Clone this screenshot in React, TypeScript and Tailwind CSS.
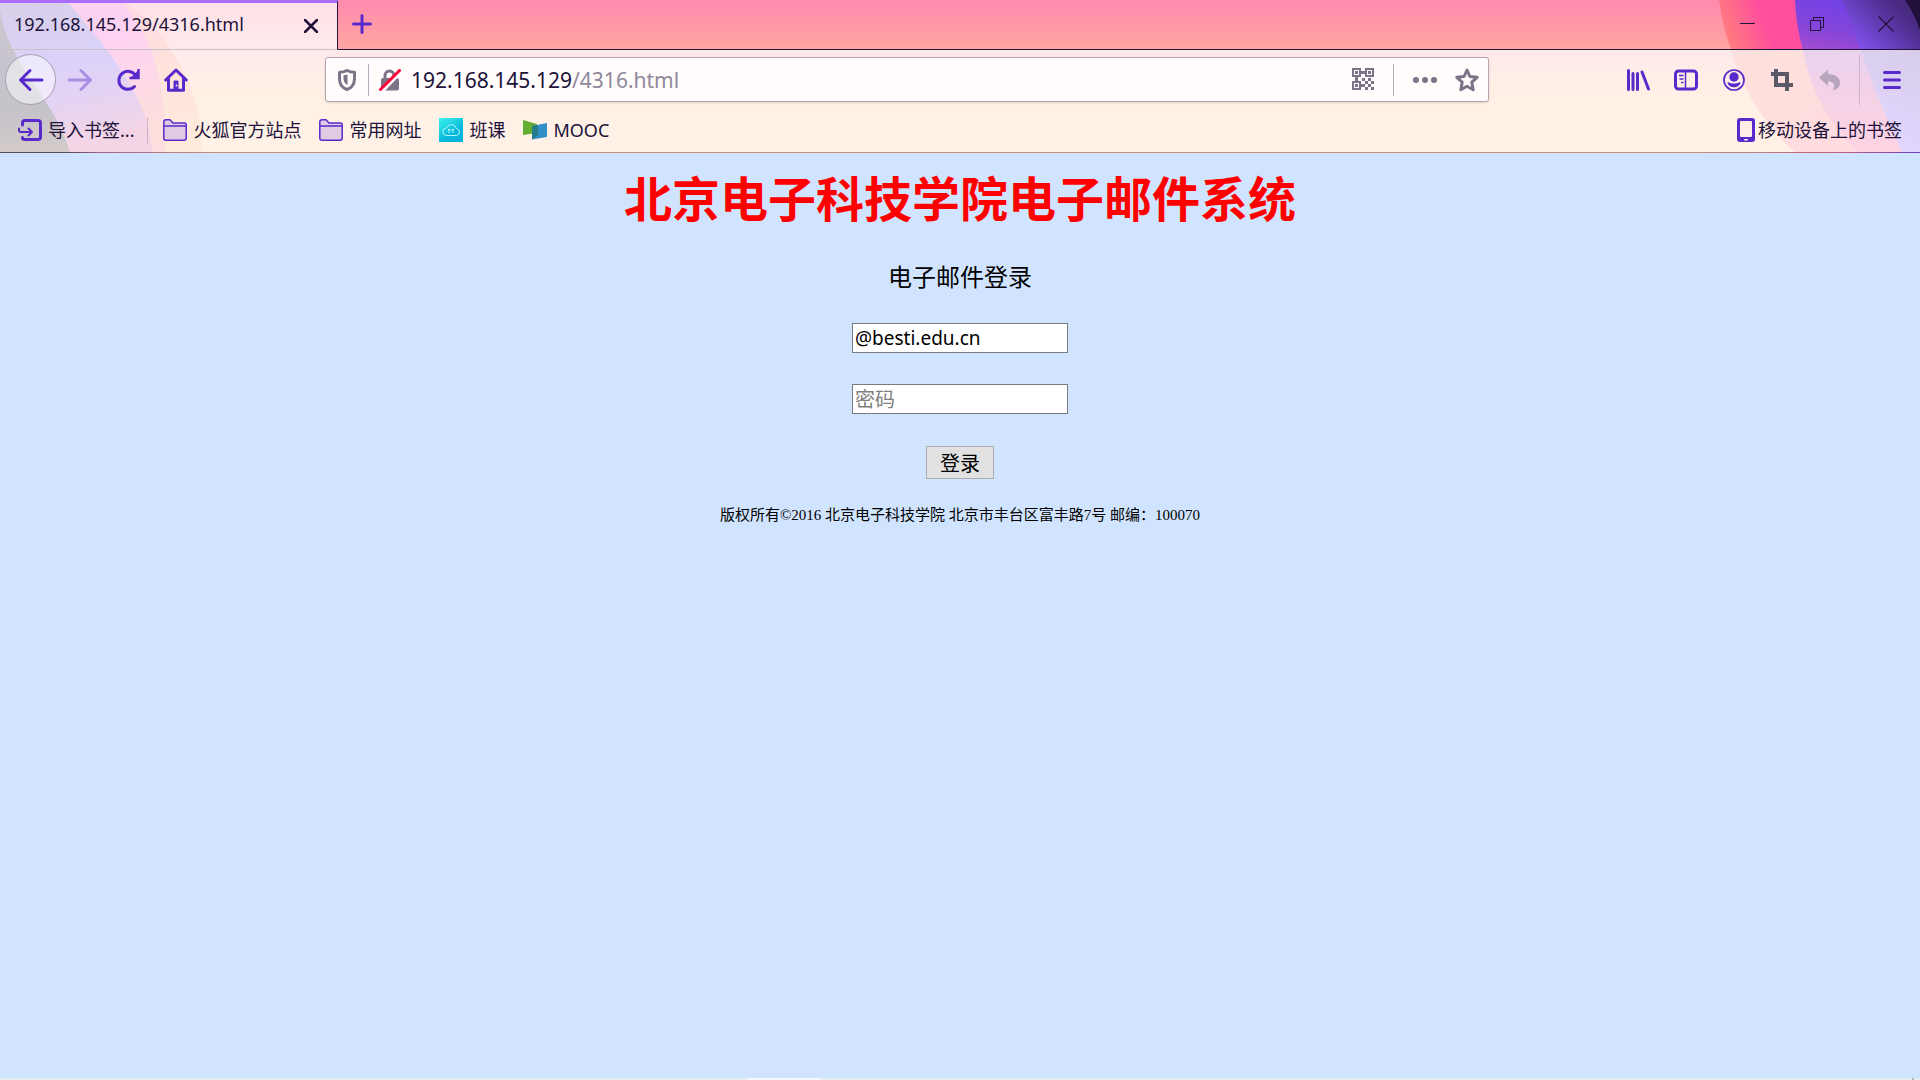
import React, { useState } from "react";

const UI_FONT = "font-['Noto_Sans','Noto_Sans_CJK_SC',sans-serif]";

const LeftArt = () => (
    <svg className="absolute left-0 top-0 -z-10" width="338" height="152" viewBox="0 0 338 152" aria-hidden="true">
        <defs>
            <linearGradient id="tabBase" x1="0" y1="0" x2="0" y2="1">
                <stop offset="0" stopColor="#ffe0e8" />
                <stop offset="0.33" stopColor="#ffeaea" />
                <stop offset="0.65" stopColor="#fff1e5" />
                <stop offset="1" stopColor="#fff1e5" />
            </linearGradient>
            <linearGradient id="peach" x1="0" y1="0" x2="0" y2="1">
                <stop offset="0" stopColor="#ffd8e2" />
                <stop offset="0.4" stopColor="#ffe2dc" />
                <stop offset="1" stopColor="#ffebdc" />
            </linearGradient>
            <linearGradient id="pink" x1="0" y1="0" x2="0.3" y2="1">
                <stop offset="0" stopColor="#f6d3f0" />
                <stop offset="0.4" stopColor="#ffd2f2" />
                <stop offset="1" stopColor="#fddfdd" />
            </linearGradient>
            <linearGradient id="lavender" x1="0" y1="0" x2="0.2" y2="1">
                <stop offset="0" stopColor="#d8cfe8" />
                <stop offset="0.45" stopColor="#dbd2f9" />
                <stop offset="0.7" stopColor="#e3d3f4" />
                <stop offset="1" stopColor="#f3d5e6" />
            </linearGradient>
            <linearGradient id="ash" x1="0" y1="0" x2="0" y2="1">
                <stop offset="0" stopColor="#cbc8d1" />
                <stop offset="0.7" stopColor="#c5c2ca" />
                <stop offset="1" stopColor="#d3cbca" />
            </linearGradient>
        </defs>
        <rect width="338" height="152" fill="url(#tabBase)" />
        <path d="M0 0H122C158 22 203 80 202 152H0Z" fill="url(#peach)" />
        <path d="M0 0H120C150 32 168 80 165 152H0Z" fill="url(#pink)" />
        <path d="M0 0H66C100 42 145 85 153 152H0Z" fill="url(#lavender)" />
        <path d="M0 10C8 65 53 95 70 152H0Z" fill="url(#ash)" />
    </svg>
);

const RightArt = () => (
    <svg className="absolute right-0 top-0 -z-10" width="220" height="152" viewBox="0 0 220 152" aria-hidden="true">
        <defs>
            <clipPath id="stripClip">
                <rect width="220" height="50" />
            </clipPath>
            <clipPath id="barClip">
                <rect y="50" width="220" height="102" />
            </clipPath>
            <linearGradient id="hot" gradientUnits="userSpaceOnUse" x1="22" y1="32" x2="62" y2="16">
                <stop offset="0" stopColor="#ff7f7c" />
                <stop offset="1" stopColor="#ff4f9e" />
            </linearGradient>
            <linearGradient id="violet" gradientUnits="userSpaceOnUse" x1="120" y1="0" x2="110" y2="50">
                <stop offset="0" stopColor="#7442e4" />
                <stop offset="0.5" stopColor="#8445da" />
                <stop offset="1" stopColor="#a24bd0" />
            </linearGradient>
            <linearGradient id="indigo" gradientUnits="userSpaceOnUse" x1="160" y1="48" x2="200" y2="8">
                <stop offset="0" stopColor="#8050ee" />
                <stop offset="1" stopColor="#482a80" />
            </linearGradient>
            <linearGradient id="paleHot" gradientUnits="userSpaceOnUse" x1="40" y1="60" x2="130" y2="150">
                <stop offset="0" stopColor="#ffe0dc" />
                <stop offset="1" stopColor="#ffdcdf" />
            </linearGradient>
            <linearGradient id="palePink" gradientUnits="userSpaceOnUse" x1="150" y1="50" x2="150" y2="152">
                <stop offset="0" stopColor="#ead2ee" />
                <stop offset="0.5" stopColor="#f5d2e6" />
                <stop offset="1" stopColor="#ffd3e3" />
            </linearGradient>
            <linearGradient id="paleViolet" gradientUnits="userSpaceOnUse" x1="180" y1="130" x2="220" y2="50">
                <stop offset="0" stopColor="#e1d5ff" />
                <stop offset="1" stopColor="#d8cde8" />
            </linearGradient>
        </defs>
        <g clipPath="url(#stripClip)">
            <path d="M19 0Q23 28 31 50H220V0Z" fill="url(#hot)" />
            <path d="M95 0Q96 27 103 50H220V0Z" fill="url(#violet)" />
            <path d="M142 0Q152 21 160 50H220V0Z" fill="url(#indigo)" />
            <path d="M205 0Q215 15 220 30V0Z" fill="#21103a" />
        </g>
        <g clipPath="url(#barClip)">
            <path d="M31 50C41 88 68 130 95 152H220V50Z" fill="url(#paleHot)" />
            <path d="M103 50C110 88 127 122 158 152H220V50Z" fill="url(#palePink)" />
            <path d="M160 50Q175 92 202 152H220V50Z" fill="url(#paleViolet)" />
        </g>
    </svg>
);

const BackIcon = () => (
    <svg width="26" height="24" viewBox="0 0 26 24" fill="none" stroke="currentColor" strokeWidth="3" strokeLinecap="round" strokeLinejoin="round">
        <path d="M24 12H3M12 2.5L2.5 12L12 21.5" />
    </svg>
);

const ForwardIcon = () => (
    <svg width="26" height="24" viewBox="0 0 26 24" fill="none" stroke="currentColor" strokeWidth="3" strokeLinecap="round" strokeLinejoin="round">
        <path d="M2 12H23M14 2.5L23.5 12L14 21.5" />
    </svg>
);

const ReloadIcon = () => (
    <svg width="24" height="24" viewBox="0 0 24 24" fill="none" stroke="currentColor" strokeWidth="3">
        <path d="M18.5 18.5A9 9 0 1 1 19.5 7.5" strokeLinecap="round" />
        <path d="M22.5 1V10H13.5" strokeWidth="2.5" />
        <path d="M22.5 2V10H14.5Z" fill="currentColor" stroke="none" />
    </svg>
);

const HomeIcon = () => (
    <svg width="24" height="24" viewBox="0 0 24 24" fill="none" stroke="currentColor" strokeWidth="3" strokeLinecap="round" strokeLinejoin="round">
        <path d="M1.7 12L12 2L22.3 12" />
        <path d="M4.5 11V22.3H19.5V11" />
        <rect x="9.5" y="12.5" width="5" height="9" rx="1" fill="currentColor" stroke="none" />
        <circle cx="12.6" cy="17.6" r="1" fill="#f8dfe4" stroke="none" />
    </svg>
);

const ShieldIcon = () => (
    <svg width="18" height="22" viewBox="0 0 18 22" fill="none" stroke="#7c7389" strokeWidth="3" strokeLinejoin="round">
        <path d="M9 1.5C11.5 2.7 13.7 3.2 16.5 3.2V9.5C16.5 15 13.5 19 9 20.5C4.5 19 1.5 15 1.5 9.5V3.2C4.3 3.2 6.5 2.7 9 1.5Z" />
        <path d="M9.5 5.5V16C6.5 14.5 5.5 12 5.5 9V6.3C7 6.2 8.2 6 9.5 5.5Z" fill="#7c7389" stroke="none" />
    </svg>
);

const LockIcon = () => (
    <svg width="22" height="22" viewBox="0 0 22 22" fill="none">
        <path d="M6 10V6.5A4.5 4.5 0 0 1 15 6.5V10" stroke="#7c7389" strokeWidth="3" />
        <rect x="2" y="9" width="18" height="12.5" rx="2" fill="#7c7389" />
        <path d="M3 22L22 2.5" stroke="#fffcfb" strokeWidth="4" />
        <path d="M1.5 20.5L20.5 1.5" stroke="#ff0039" strokeWidth="3" strokeLinecap="round" />
    </svg>
);

const QrIcon = () => (
    <svg width="22" height="23" viewBox="0 0 22 23" fill="#7c7389">
        <path d="M0 0H9V9H0ZM2 2V7H7V2ZM13 0H22V9H13ZM15 2V7H20V2ZM0 13H9V22H0ZM2 15V20H7V15Z" fillRule="evenodd" />
        <path d="M3 3H6V6H3ZM16 3H19V6H16ZM3 16H6V19H3ZM9 3H13V6H9ZM3 9H6V13H3ZM9 16H11V19H9Z" />
        <path d="M10 10h3v3h-3zM16 10h3v3h-3zM13 13h3v3h-3zM19 13h3v3h-3zM11 16h2v3h-2zM16 16h3v3h-3zM13 19h3v3h-3zM19 19h3v3h-3z" />
    </svg>
);

const DotsIcon = () => (
    <svg width="24" height="6" viewBox="0 0 24 6" fill="#7c7389">
        <circle cx="3" cy="3" r="3" />
        <circle cx="12" cy="3" r="3" />
        <circle cx="21" cy="3" r="3" />
    </svg>
);

const StarIcon = () => (
    <svg width="24" height="24" viewBox="0 0 24 24" fill="none" stroke="#7c7389" strokeWidth="3" strokeLinejoin="round">
        <path d="M12 2L14.9 8.5L22.2 9.3L16.8 14.2L18.2 21.8L12 18.2L5.8 21.8L7.2 14.2L1.8 9.3L9.1 8.5Z" />
    </svg>
);

const LibraryIcon = () => (
    <svg width="24" height="22" viewBox="0 0 24 22" fill="none" stroke="currentColor" strokeWidth="3" strokeLinecap="round">
        <path d="M2.5 1.5V20.5M7 4.5V20.5M11.5 4.5V20.5M16 3L22.5 20" />
    </svg>
);

const SidebarIcon = () => (
    <svg width="24" height="22" viewBox="0 0 24 22" fill="none" stroke="currentColor">
        <rect x="1.5" y="2" width="21" height="18" rx="3" strokeWidth="3" />
        <path d="M11.5 2V20" strokeWidth="1.5" />
        <path d="M5 6.5H9.5M5.5 10H9.5M7 13.5H9.5" strokeWidth="1.7" />
    </svg>
);

const AccountIcon = () => (
    <svg width="22" height="22" viewBox="0 0 22 22" fill="currentColor">
        <circle cx="11" cy="11" r="10" fill="none" stroke="currentColor" strokeWidth="1.7" />
        <circle cx="11" cy="8" r="4.7" />
        <path d="M4.5 13.2C6.5 13 7 14.5 11 14.5S15.5 13 17.5 13.2C17.5 16 14.5 18.2 11 18.2S4.5 16 4.5 13.2Z" />
    </svg>
);

const CropIcon = () => (
    <svg width="22" height="22" viewBox="0 0 22 22" fill="none" stroke="#5a5a66" strokeWidth="4">
        <path d="M5 0V16H22M0 5H16V22" />
    </svg>
);

const UndoIcon = () => (
    <svg width="22" height="22" viewBox="0 0 22 22" fill="#b7a5bd">
        <path d="M0 8.5L9 0.5V5C17 5 21 9 21 14C21 18 18 21 13 21C16.5 18.5 16.5 12.5 9 12.5V17Z" />
    </svg>
);

const MenuIcon = () => (
    <svg width="18" height="18" viewBox="0 0 18 18" stroke="currentColor" strokeWidth="3" strokeLinecap="round">
        <path d="M1.5 1.5H16.5M1.5 9H16.5M1.5 16.5H16.5" />
    </svg>
);

const ImportIcon = () => (
    <svg width="24" height="22" viewBox="0 0 24 22" fill="none" stroke="#592acb" strokeLinecap="round" strokeLinejoin="round">
        <path d="M4.5 6V4Q4.5 1.5 7 1.5H20Q22.5 1.5 22.5 4V18Q22.5 20.5 20 20.5H7Q4.5 20.5 4.5 18.5" strokeWidth="3" />
        <path d="M1 9.5V11Q1 13 3 13H14M10.5 9.5L14 13L10.5 16.5" strokeWidth="2" />
    </svg>
);

const FolderIcon = () => (
    <svg width="24" height="22" viewBox="0 0 24 22" fill="#e0cbe3" stroke="#592acb" strokeWidth="1.5" strokeLinejoin="round">
        <path d="M0.8 19V3Q0.8 0.8 3 0.8H7L10 4H21.5Q23.2 4 23.2 6V19Q23.2 21.2 21 21.2H3Q0.8 21.2 0.8 19Z" />
        <path d="M1 7H23" />
    </svg>
);

const CloudIcon = () => (
    <svg width="24" height="24" viewBox="0 0 24 24" fill="none">
        <defs>
            <linearGradient id="cloudBg" x1="0" y1="0" x2="0.7" y2="1">
                <stop offset="0" stopColor="#3df5ea" />
                <stop offset="0.7" stopColor="#08b9dc" />
                <stop offset="1" stopColor="#08b4da" />
            </linearGradient>
        </defs>
        <rect width="24" height="24" fill="url(#cloudBg)" />
        <path d="M7 17.5H17.5A3.5 3.5 0 0 0 17.5 10.6A5.3 5.3 0 0 0 7.5 9.8A3.9 3.9 0 0 0 7 17.5Z" stroke="#b5f5fb" />
        <path d="M9 11.5H11L12 12.5L13 11.5H15M10 12V15M14 12V15" stroke="#b5f5fb" />
    </svg>
);

const MoocIcon = () => (
    <svg width="24" height="20" viewBox="0 0 24 20">
        <path d="M0 0L14 4V13L0 15Z" fill="#62ad34" />
        <path d="M9 6L24 3V17L9 19.5Z" fill="#308fc6" />
        <path d="M9 6L15 5V15L9 19.5Z" fill="#267b8b" />
    </svg>
);

const PhoneIcon = () => (
    <svg width="18" height="24" viewBox="0 0 18 24">
        <rect width="18" height="24" rx="3" fill="#592acb" />
        <rect x="3" y="3" width="12" height="16" rx="1" fill="#ffeee6" />
        <rect x="7" y="21" width="4" height="1.5" rx="0.7" fill="#ffeee6" />
    </svg>
);

const bookmarks = [
    { label: "火狐官方站点", icon: <FolderIcon /> },
    { label: "常用网址", icon: <FolderIcon /> },
    { label: "班课", icon: <CloudIcon /> },
    { label: "MOOC", icon: <MoocIcon /> },
];

const tools = [
    { label: "我的足迹", icon: <LibraryIcon /> },
    { label: "侧栏", icon: <SidebarIcon /> },
    { label: "账户", icon: <AccountIcon /> },
    { label: "截图", icon: <CropIcon /> },
    { label: "撤销", icon: <UndoIcon /> },
];

const ToolButton = ({ label, children }: { label: string; children: React.ReactNode }) => (
    <button type="button" aria-label={label} className="flex h-12 w-12 items-center justify-center">
        {children}
    </button>
);

function TabStrip() {
    return (
        <div className="flex h-[50px]">
            <div className="flex w-[338px] items-center justify-between border-r border-b border-t-3 border-t-[#a96eff] border-r-[#20123a] border-b-[#c9c0c8] pl-3.5 pr-[19px]">
                <span className="pb-1 text-[18px] leading-6 text-[#20123a]">192.168.145.129/4316.html</span>
                <button type="button" aria-label="关闭标签页">
                    <svg width="14" height="14" viewBox="0 0 14 14" stroke="#20123a" strokeWidth="2.5" strokeLinecap="round">
                        <path d="M1 1L13 13M13 1L1 13" />
                    </svg>
                </button>
            </div>
            <div className="flex flex-1 justify-between border-b border-[#20123a] pb-px">
                <button type="button" aria-label="新建标签页" className="flex w-12 items-center justify-center">
                    <svg width="20" height="20" viewBox="0 0 20 20" stroke="#592acb" strokeWidth="3" strokeLinecap="round">
                        <path d="M10 1.5V18.5M1.5 10H18.5" />
                    </svg>
                </button>
                <div className="flex">
                    <button type="button" aria-label="最小化" className="flex w-[69px] items-center justify-center">
                        <svg width="15" height="16" viewBox="0 0 15 16" stroke="#20123a">
                            <path d="M0 7.5H15" />
                        </svg>
                    </button>
                    <button type="button" aria-label="还原" className="flex w-[69px] items-center justify-center">
                        <svg width="14" height="14" viewBox="0 0 14 14" fill="none" stroke="#20123a">
                            <path d="M0.5 3.5H10.5V13.5H0.5ZM3.5 3.5V0.5H13.5V10.5H10.5" />
                        </svg>
                    </button>
                    <button type="button" aria-label="关闭" className="flex w-[69px] items-center justify-center">
                        <svg width="16" height="16" viewBox="0 0 16 16" stroke="#20123a" strokeWidth="1.2">
                            <path d="M0.5 0.5L15.5 15.5M15.5 0.5L0.5 15.5" />
                        </svg>
                    </button>
                </div>
            </div>
        </div>
    );
}

function NavBar() {
    return (
        <nav className="flex h-[59px] items-center pl-[5px] pr-1 text-[#592acb]">
            <button type="button" aria-label="后退" className="flex h-[51px] w-[51px] items-center justify-center rounded-full border border-[#a79fae] bg-white/50">
                <BackIcon />
            </button>
            <button type="button" aria-label="前进" disabled className="flex h-12 w-12 items-center justify-center opacity-40">
                <ForwardIcon />
            </button>
            <ToolButton label="刷新"><ReloadIcon /></ToolButton>
            <ToolButton label="主页"><HomeIcon /></ToolButton>

            <div className="mx-[125px] flex h-[45px] flex-1 items-center rounded-[3px] border border-[#b5a5b0] bg-[#fffcfb] pl-3 pr-[9px] shadow-sm">
                <ShieldIcon />
                <div className="ml-3 mr-[10px] h-8 w-px bg-[#b5adbc]" />
                <LockIcon />
                <div className="ml-[10px] flex-1 text-[21px] leading-7 text-[#20123a]">
                    192.168.145.129<span className="text-[#8f889c]">/4316.html</span>
                </div>
                <QrIcon />
                <div className="mx-[19px] h-8 w-px bg-[#b5adbc]" />
                <DotsIcon />
                <button type="button" aria-label="为此页添加书签" className="ml-[18px]">
                    <StarIcon />
                </button>
            </div>

            {tools.map((t) => (
                <ToolButton key={t.label} label={t.label}>{t.icon}</ToolButton>
            ))}
            <div className="ml-[5px] mr-2 h-[51px] w-px bg-[#cdb4cc]" />
            <ToolButton label="菜单"><MenuIcon /></ToolButton>
        </nav>
    );
}

function BookmarkBar() {
    return (
        <div className="flex h-[43px] items-center pb-px pl-[18px] pr-[18px] text-[18px] leading-6 text-[#20123a]">
            <a href="#" className="flex items-center gap-1.5">
                <ImportIcon />
                <span>导入书签...</span>
            </a>
            <div className="ml-[13px] mr-[15px] h-[27px] w-px bg-[#cdb4c4]" />
            <div className="flex flex-1 gap-[18px]">
                {bookmarks.map((b) => (
                    <a key={b.label} href="#" className="flex items-center gap-1.5">
                        {b.icon}
                        <span>{b.label}</span>
                    </a>
                ))}
            </div>
            <a href="#" className="flex items-center gap-[3px]">
                <PhoneIcon />
                <span>移动设备上的书签</span>
            </a>
        </div>
    );
}

export default function App() {
    const [email, setEmail] = useState("@besti.edu.cn");
    const [password, setPassword] = useState("");

    return (
        <div className={`flex min-h-screen flex-col bg-[#d0e4ff] ${UI_FONT}`}>
            <header className="relative isolate bg-[linear-gradient(#ff8aae_0px,#ffa6a1_50px,#ffe9e9_50px,#fff1e5_100px)]">
                <LeftArt />
                <RightArt />
                <TabStrip />
                <NavBar />
                <BookmarkBar />
                <div className="h-px bg-[linear-gradient(90deg,#5d4a5c_0px,#5d4a5c_70px,#a0648c_100px,#bf8f7c_210px,#bf8f7c_1700px,#c0607c_1840px,#6a3fc0_100%)]" />
            </header>

            <main className="flex flex-1 flex-col items-center text-black">
                <h1 className="mt-[11px] text-[48px] font-bold leading-[70px] text-[#ff0000]">北京电子科技学院电子邮件系统</h1>
                <p className="mt-[25px] text-2xl leading-9">电子邮件登录</p>
                <form className="flex flex-col items-center" onSubmit={(e) => e.preventDefault()}>
                    <input
                        type="text"
                        name="email"
                        aria-label="邮箱"
                        value={email}
                        onChange={(e) => setEmail(e.target.value)}
                        className="mt-7 h-[30px] w-[216px] border border-[#7a7a7a] bg-white px-0.5 text-[19px] leading-7"
                    />
                    <input
                        type="password"
                        name="password"
                        aria-label="密码"
                        placeholder="密码"
                        value={password}
                        onChange={(e) => setPassword(e.target.value)}
                        className="mt-[31px] h-[30px] w-[216px] border border-[#7a7a7a] bg-white px-0.5 text-[20px] leading-7 placeholder-[#7f7f7f]"
                    />
                    <button type="submit" className="mt-8 h-[33px] w-[68px] border border-[#adadad] bg-[#e1e1e1] pt-0.5 text-[20px] leading-7">
                        登录
                    </button>
                </form>
                <p className="mt-6 font-['Liberation_Serif','Noto_Sans_CJK_SC',serif] text-[15px] leading-6">
                    版权所有©2016 北京电子科技学院 北京市丰台区富丰路7号 邮编：100070
                </p>
            </main>

            <div className="flex h-0.5 justify-end bg-[linear-gradient(90deg,#e5edf5_38.9%,#f7fafa_38.9%,#f7fafa_42.7%,#e5edf5_42.7%)] pr-[6px]">
                <div className="w-0.5 bg-[#a9b4c0]" />
            </div>
        </div>
    );
}
